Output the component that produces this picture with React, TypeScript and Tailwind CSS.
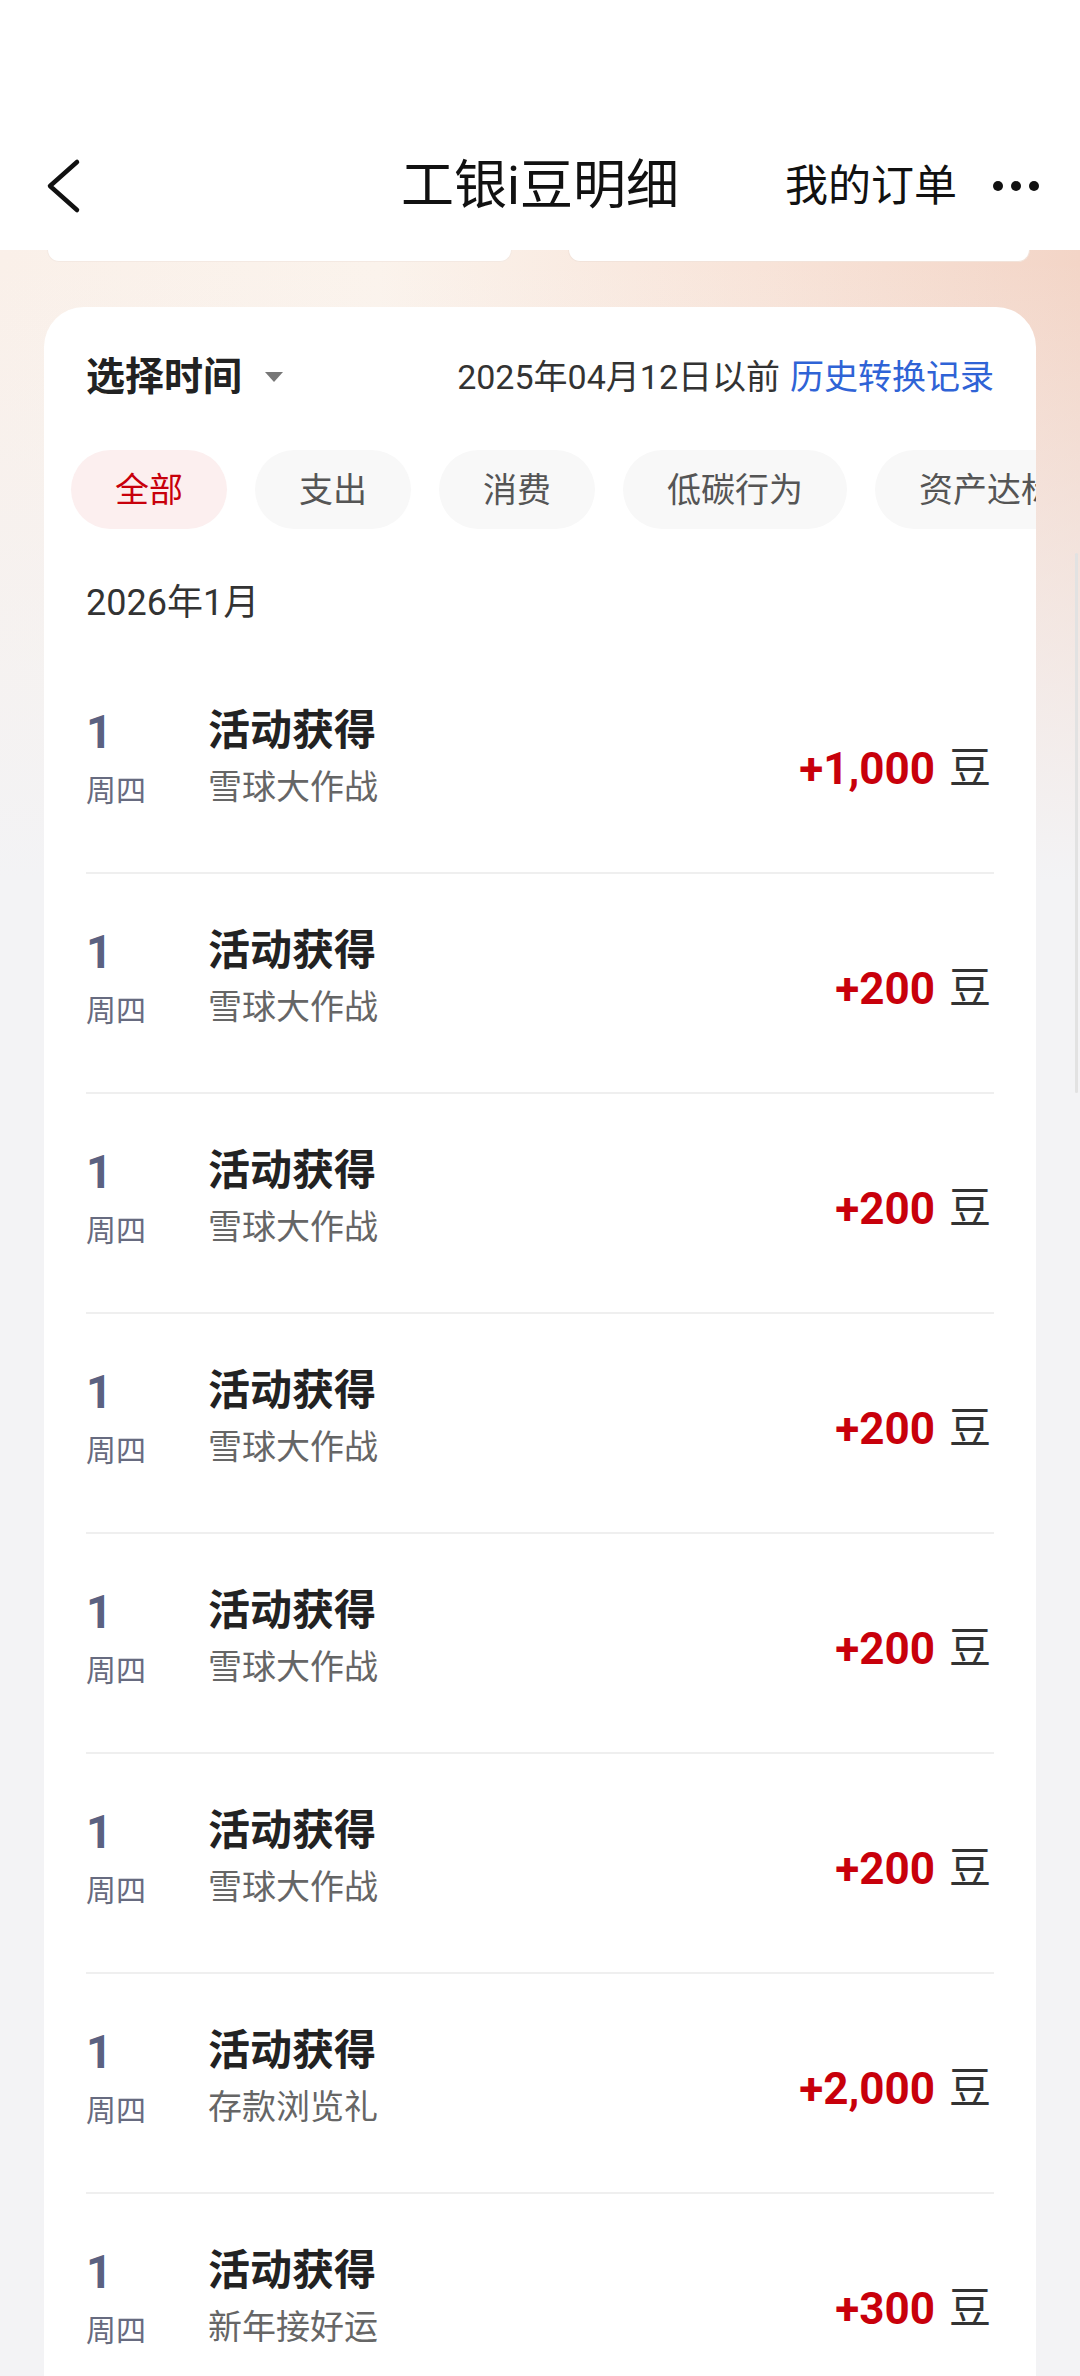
import React from 'react';

const rows = [
    { day: '1', week: '周四', title: '活动获得', desc: '雪球大作战', amount: '+1,000' },
    { day: '1', week: '周四', title: '活动获得', desc: '雪球大作战', amount: '+200' },
    { day: '1', week: '周四', title: '活动获得', desc: '雪球大作战', amount: '+200' },
    { day: '1', week: '周四', title: '活动获得', desc: '雪球大作战', amount: '+200' },
    { day: '1', week: '周四', title: '活动获得', desc: '雪球大作战', amount: '+200' },
    { day: '1', week: '周四', title: '活动获得', desc: '雪球大作战', amount: '+200' },
    { day: '1', week: '周四', title: '活动获得', desc: '存款浏览礼', amount: '+2,000' },
    { day: '1', week: '周四', title: '活动获得', desc: '新年接好运', amount: '+300' },
];

const chips = ['全部', '支出', '消费', '低碳行为', '资产达标'];

export default function App() {
    return (
        <div className="relative w-[1080px] h-[2376px] overflow-hidden font-[Roboto,'Noto_Sans_CJK_SC',sans-serif] bg-[linear-gradient(180deg,rgba(243,243,245,0)_260px,#f3f3f5_880px),linear-gradient(90deg,#faf0e9,#fbf3ec_35%,#f8e4d9_70%,#f3d5c7)]">
            {/* header */}
            <div className="h-[250px] bg-white pt-[150px]">
                <div className="grid h-[72px] grid-cols-[1fr_auto_1fr] items-center">
                    <div className="pl-[46px]">
                        <svg width="36" height="56" viewBox="0 0 36 56" fill="none">
                            <polyline points="31,4 4,28 31,52" stroke="#111" strokeWidth="4.5" strokeLinecap="round" strokeLinejoin="round" />
                        </svg>
                    </div>
                    <div className="text-[53px] leading-none text-[#111]">工银i豆明细</div>
                    <div className="flex items-center justify-end pr-[41px]">
                        <span className="text-[43px] leading-none text-[#111]">我的订单</span>
                        <div className="ml-[36px] flex items-center gap-[8px]">
                            <span className="h-[10px] w-[10px] rounded-full bg-[#111]" />
                            <span className="h-[10px] w-[10px] rounded-full bg-[#111]" />
                            <span className="h-[10px] w-[10px] rounded-full bg-[#111]" />
                        </div>
                    </div>
                </div>
            </div>

            {/* peeking cards under header */}
            <div className="flex h-[57px] items-start">
                <div className="ml-[47px] h-[12px] w-[465px] rounded-b-[22px] border border-t-0 border-[#f4e9e2] bg-white" />
                <div className="ml-[56px] h-[12px] w-[462px] rounded-b-[22px] border border-t-0 border-[#f2e3da] bg-white" />
            </div>

            {/* main card */}
            <div className="mx-[44px] h-[2100px] rounded-t-[40px] bg-white pt-[30px]">
                <div className="flex h-[80px] items-center justify-between px-[42px]">
                    <div className="flex items-center">
                        <span className="text-[39px] font-bold leading-none text-[#222]">选择时间</span>
                        <svg className="ml-[22px]" width="20" height="12" viewBox="0 0 20 12">
                            <polygon points="1,1 19,1 10,11" fill="#777" />
                        </svg>
                    </div>
                    <div className="flex items-center text-[34px] leading-none">
                        <span className="text-[#333]">2025年04月12日以前</span>
                        <span className="ml-[10px] text-[#2f63d6]">历史转换记录</span>
                    </div>
                </div>

                <div className="mt-[33px] flex gap-[28px] overflow-hidden pl-[27px]">
                    {chips.map((c, i) => (
                        <div
                            key={c}
                            className={`flex h-[79px] shrink-0 items-center rounded-full px-[44px] text-[34px] leading-none ${i === 0 ? 'bg-[#fcefef] text-[#c8000b]' : 'bg-[#f8f8f8] text-[#555]'}`}
                        >
                            {c}
                        </div>
                    ))}
                </div>

                <div className="mt-[49px] flex h-[50px] items-center px-[42px] text-[36px] leading-none text-[#333]">2026年1月</div>

                <div className="mt-[26px] px-[42px]">
                    {rows.map((r, i) => (
                        <div key={i} className="box-border flex h-[220px] items-center border-b-2 border-[#efefef] pb-[14px]">
                            <div className="flex w-[122px] shrink-0 flex-col pt-[6px]">
                                <span className="text-[46px] font-bold leading-[50px] text-[#5b6181]">{r.day}</span>
                                <span className="mt-[14px] text-[30px] leading-[40px] text-[#676b80]">{r.week}</span>
                            </div>
                            <div className="flex flex-1 flex-col">
                                <span className="text-[42px] font-bold leading-[50px] text-[#222]">{r.title}</span>
                                <span className="mt-[11px] text-[34px] leading-[40px] text-[#666]">{r.desc}</span>
                            </div>
                            <div className="mt-[26px] flex items-center pr-[3px]">
                                <span className="text-[44px] font-bold leading-none text-[#c8000b]">{r.amount}</span>
                                <span className="ml-[14px] text-[42px] leading-none text-[#333]">豆</span>
                            </div>
                        </div>
                    ))}
                </div>
            </div>

            {/* scrollbar */}
            <div className="absolute right-[2px] top-[553px] h-[540px] w-[3px] rounded-full bg-[#e2e2e2]" />
        </div>
    );
}
